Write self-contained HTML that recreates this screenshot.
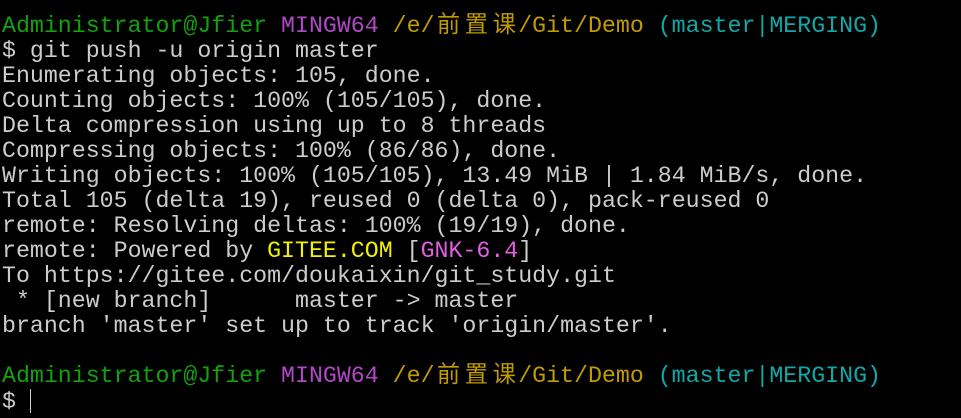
<!DOCTYPE html>
<html><head><meta charset="utf-8"><style>
html,body{margin:0;padding:0;background:#000;width:961px;height:418px;overflow:hidden}
pre{margin:0;padding:14px 0 0 2px;font-family:"Liberation Mono","Noto Sans CJK SC",monospace;font-size:23.25px;line-height:25px;color:#cccccc;white-space:pre}
.g{color:#13a10e}.m{color:#b148c6}.y{color:#c19c00}.c{color:#11a8a8}.Y{color:#f2f200}.M{color:#e060e0}
.k{display:inline-block;width:2ch;text-align:center}
.cur{display:inline-block;width:1px;height:24px;background:#ccc;vertical-align:-5px}
</style></head><body><pre><span class="g">Administrator@Jfier</span> <span class="m">MINGW64</span> <span class="y">/e/<span class="k">前</span><span class="k">置</span><span class="k">课</span>/Git/Demo</span> <span class="c">(master|MERGING)</span>
$ git push -u origin master
Enumerating objects: 105, done.
Counting objects: 100% (105/105), done.
Delta compression using up to 8 threads
Compressing objects: 100% (86/86), done.
Writing objects: 100% (105/105), 13.49 MiB | 1.84 MiB/s, done.
Total 105 (delta 19), reused 0 (delta 0), pack-reused 0
remote: Resolving deltas: 100% (19/19), done.
remote: Powered by <span class="Y">GITEE.COM</span> [<span class="M">GNK-6.4</span>]
To https://gitee.com/doukaixin/git_study.git
 * [new branch]      master -&gt; master
branch 'master' set up to track 'origin/master'.

<span class="g">Administrator@Jfier</span> <span class="m">MINGW64</span> <span class="y">/e/<span class="k">前</span><span class="k">置</span><span class="k">课</span>/Git/Demo</span> <span class="c">(master|MERGING)</span>
$ <span class="cur"></span></pre></body></html>
